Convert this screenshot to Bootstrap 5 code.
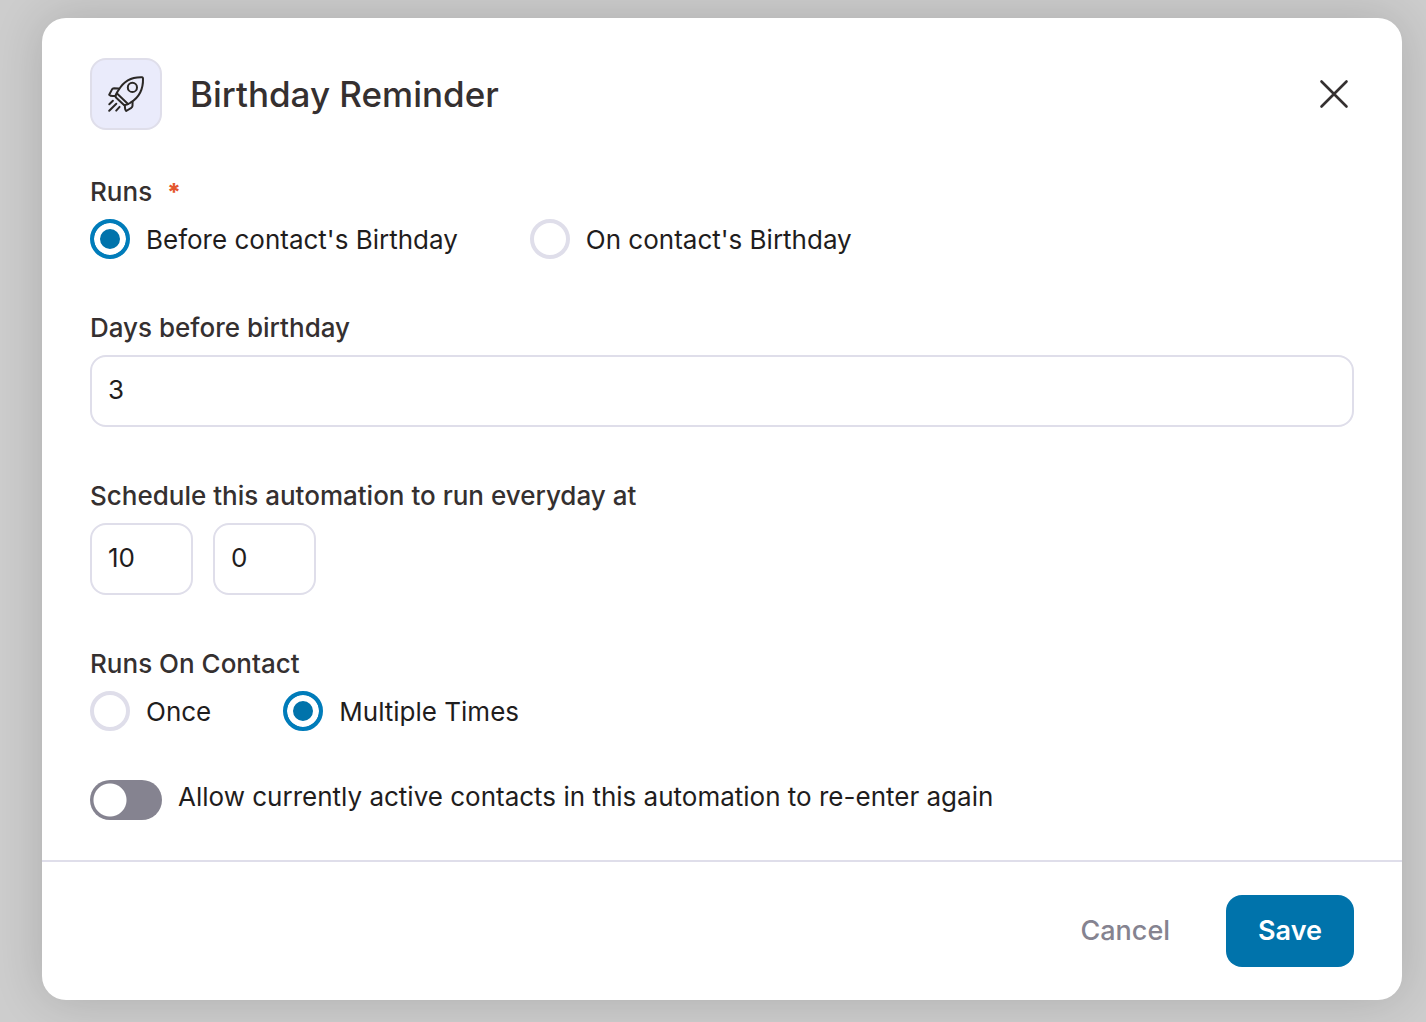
<!DOCTYPE html>
<html lang="en">
<head>
<meta charset="utf-8">
<meta name="viewport" content="width=device-width, initial-scale=1">
<title>Birthday Reminder</title>
<link href="https://cdn.jsdelivr.net/npm/bootstrap@5.3.0/dist/css/bootstrap.min.css" rel="stylesheet">
<style>
  :root { --line: #dfdeea; --ink: #353030; --text: #1f1d1d; --muted: #858390; --brand: #0073ab; }
  body { background: #cdcdcd; font-family: Inter, "Liberation Sans", sans-serif; font-size: 26px; line-height: 34px; color: var(--text); }
  .dialog-wrap { padding: 18px 24px 22px 42px; }
  .dialog-panel { background: #fff; border-radius: 24px; box-shadow: 0 0 50px rgba(0, 0, 0, .16); }
  .dialog-head { padding: 40px 48px 0; gap: 28px; }
  .icon-tile { width: 72px; height: 72px; border: 2px solid var(--line); border-radius: 16px; background: #eaebfb; }
  .dialog-title { font-size: 35px; line-height: 44px; font-weight: 500; color: var(--ink); }
  .close-x { width: 40px; height: 40px; color: var(--ink); }
  .dialog-main { padding: 43px 48px 40px; }
  .field { margin: 0 0 50px; }
  .field-last { margin-bottom: 49px; }
  .field-label { font-size: 26px; line-height: 38px; font-weight: 500; color: var(--ink); margin: 0 0 8px; float: none; }
  .req { color: #e4572e; margin-left: 8px; font-size: 24px; font-weight: 800; line-height: 1; }
  .box.form-control { height: 72px; padding: 0 16px 4px; border: 2px solid var(--line); border-radius: 16px; font-size: 26px; color: var(--text); }
  .time-box.form-control { width: 103px; }
  .time-row { gap: 20px; }
  .choices { gap: 16px 72px; }
  .choice { gap: 16px; }
  .choice label { padding-top: 2px; }
  .choice .form-check-input { width: 40px; height: 40px; border: 4px solid var(--line); margin: 0; flex: none; }
  .choice .form-check-input:checked { background: var(--brand); border-color: #007cba; box-shadow: inset 0 0 0 6px #fff; }
  .toggle-row { gap: 16px; }
  .toggle-row .form-check-input { width: 72px; height: 40px; border: 0; border-radius: 20px; margin: 0; flex: none;
    background: radial-gradient(circle at 20px 20px, #fff 0 16px, var(--muted) 17px); }
  .toggle-row .form-check-input:checked { background: radial-gradient(circle at 52px 20px, #fff 0 16px, var(--brand) 17px); }
  .dialog-foot { border-top: 2px solid var(--line); padding: 33px 48px; gap: 24px; }
  .dialog-foot .btn { height: 72px; padding: 0 32px; border: 0; border-radius: 16px; font-size: 27px; line-height: 36px; }
  .dialog-foot .btn-quiet { color: var(--muted); font-weight: 500; }
  .dialog-foot .btn-brand, .dialog-foot .btn-brand:hover { background: var(--brand); color: #fff; font-weight: 600; }
</style>
</head>
<body>
<div class="dialog-wrap">
  <form class="dialog-panel" role="dialog" aria-labelledby="dlgTitle">
    <header class="dialog-head d-flex align-items-center">
      <span class="icon-tile d-flex align-items-center justify-content-center flex-shrink-0">
        <svg width="40" height="40" viewBox="0 0 40 40" fill="none" stroke="#2b2826" stroke-width="2" stroke-linecap="round" stroke-linejoin="round" aria-hidden="true">
          <path d="M12.6 16C17.5 7.5 26 2.8 36.2 3.2C37 3.3 37 3.7 37 4.5C37.3 14.500 33 23.500 24.500 28.700C21.500 30.500 20 31.500 18 31L9.700 23.200C8.800 21 10.800 19 12.600 16Z"/>
          <path d="M11 19.600L22 30"/>
          <circle cx="26.400" cy="13.400" r="4.600"/>
          <path d="M12.600 14.500L8 14.300Q6.600 14.400 5.900 15.600L3.200 20.700Q4.500 22 6.700 22L9.400 22"/>
          <path d="M26.600 27.400L26.500 31.800Q26.300 33 25.300 33.800L20.200 37Q19 36 19 34L18.800 31"/>
          <path d="M6.900 26.800L3.300 30.200M10.300 29.800L3.200 36.700M13.600 32.900L10.200 36.600"/>
        </svg>
      </span>
      <h1 class="dialog-title m-0 flex-grow-1" id="dlgTitle">Birthday Reminder</h1>
      <button type="button" class="btn close-x border-0 p-0 d-flex align-items-center justify-content-center" aria-label="Close">
        <svg width="40" height="40" viewBox="0 0 40 40" fill="none" stroke="currentColor" stroke-width="2.600" stroke-linecap="round" aria-hidden="true"><path d="M7.500 7.500L32.500 32.500M32.500 7.500L7.500 32.500"/></svg>
      </button>
    </header>

    <div class="dialog-main">
      <fieldset class="field">
        <legend class="field-label">Runs <span class="req">*</span></legend>
        <div class="choices d-flex flex-wrap">
          <div class="choice d-flex align-items-center">
            <input class="form-check-input" type="radio" name="runs" id="runsBefore" checked>
            <label for="runsBefore">Before contact's Birthday</label>
          </div>
          <div class="choice d-flex align-items-center">
            <input class="form-check-input" type="radio" name="runs" id="runsOn">
            <label for="runsOn">On contact's Birthday</label>
          </div>
        </div>
      </fieldset>

      <div class="field">
        <label class="field-label d-block" for="days">Days before birthday</label>
        <input class="form-control box" type="text" inputmode="numeric" id="days" value="3">
      </div>

      <div class="field">
        <label class="field-label d-block" for="hour">Schedule this automation to run everyday at</label>
        <div class="time-row d-flex">
          <input class="form-control box time-box" type="text" inputmode="numeric" id="hour" value="10">
          <input class="form-control box time-box" type="text" inputmode="numeric" id="minute" value="0" aria-label="Minute">
        </div>
      </div>

      <fieldset class="field field-last">
        <legend class="field-label">Runs On Contact</legend>
        <div class="choices d-flex flex-wrap">
          <div class="choice d-flex align-items-center">
            <input class="form-check-input" type="radio" name="times" id="once">
            <label for="once">Once</label>
          </div>
          <div class="choice d-flex align-items-center">
            <input class="form-check-input" type="radio" name="times" id="multiple" checked>
            <label for="multiple">Multiple Times</label>
          </div>
        </div>
      </fieldset>

      <div class="toggle-row d-flex">
        <input class="form-check-input" type="checkbox" role="switch" id="reenter">
        <label for="reenter">Allow currently active contacts in this automation to re-enter again</label>
      </div>
    </div>

    <footer class="dialog-foot d-flex justify-content-end">
      <button type="button" class="btn btn-quiet">Cancel</button>
      <button type="submit" class="btn btn-brand">Save</button>
    </footer>
  </form>
</div>
<script src="https://cdn.jsdelivr.net/npm/bootstrap@5.3.0/dist/js/bootstrap.bundle.min.js"></script>
</body>
</html>
